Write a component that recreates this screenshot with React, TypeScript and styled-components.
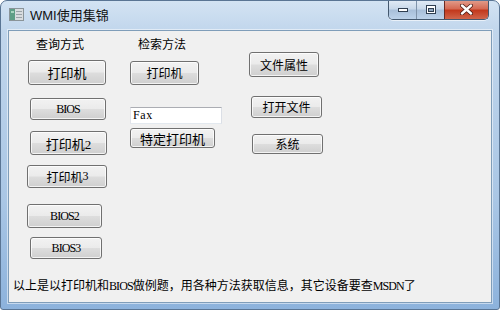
import React from 'react'
import styled, { createGlobalStyle } from 'styled-components'

const GlobalStyle = createGlobalStyle`
	html, body {
		margin: 0;
		padding: 0;
		background: #ffffff;
	}
`

const cjk = `"Liberation Serif", "Noto Sans CJK SC", serif`

type BoxProps = { $w: number; $h: number; $mt: number; $ml?: number; $fs?: number }

const Window = styled.div`
	width: 500px;
	height: 310px;
	box-sizing: border-box;
	display: flex;
	flex-direction: column;
	border: 1px solid #5a7594;
	border-radius: 7px 7px 3px 3px;
	background: linear-gradient(180deg, #d3e3f3 0px, #c1d6ec 30px, #a9c6e5 200px, #8cb2dc 310px);
	padding: 0 7px 6px 7px;
	font-family: ${cjk};
	overflow: hidden;
`

const TitleBar = styled.div`
	height: 29px;
	display: flex;
	align-items: flex-start;
`

const AppIcon = styled.svg`
	margin: 7px 0 0 1px;
	flex: none;
`

const Title = styled.span`
	margin: 7px 0 0 6px;
	font-family: "Liberation Sans", "Noto Sans CJK SC", sans-serif;
	font-size: 13px;
	line-height: 15px;
	color: #111;
	flex: 1;
`

const CaptionGroup = styled.div`
	display: flex;
	height: 19px;
	margin: -1px 3px 0 0;
	border: 1px solid #44586e;
	border-top: none;
	border-radius: 0 0 5px 5px;
	overflow: hidden;
	box-shadow: 0 1px 0 rgba(255, 255, 255, 0.6);
`

const CapBtn = styled.div<{ $w: number; $close?: boolean }>`
	width: ${(p) => p.$w}px;
	height: 100%;
	display: flex;
	align-items: center;
	justify-content: center;
	border-left: ${(p) => (p.$close ? '1px solid #6b2a22' : '1px solid #7f93aa')};
	background: ${(p) =>
		p.$close
			? 'linear-gradient(180deg, #e2a08f 0%, #d56b55 45%, #c2391d 55%, #d0654b 100%)'
			: 'linear-gradient(180deg, #e3ecf6 0%, #c9d9ea 45%, #a9c0da 55%, #bcd2ea 100%)'};
	&:first-child {
		border-left: none;
	}
`

const Client = styled.div`
	flex: 1;
	display: flex;
	flex-direction: column;
	background: #f0f0f0;
	border: 1px solid #7f9db9;
	box-shadow: 0 0 0 1px rgba(255, 255, 255, 0.5);
`

const Columns = styled.div`
	flex: 1;
	display: flex;
	align-items: flex-start;
`

const Column = styled.div<{ $w: number; $ml: number }>`
	width: ${(p) => p.$w}px;
	margin-left: ${(p) => p.$ml}px;
	display: flex;
	flex-direction: column;
	align-items: flex-start;
`

const Label = styled.div<{ $mt: number; $ml: number }>`
	margin-top: ${(p) => p.$mt}px;
	margin-left: ${(p) => p.$ml}px;
	font-size: 12px;
	line-height: 14px;
	color: #000;
`

// ASCII runs are narrower in the original bitmap font
const Latin = styled.span`
	font-family: "Liberation Serif", serif;
	font-size: 12px;
	letter-spacing: -0.9px;
`

const Button = styled.div<BoxProps>`
	box-sizing: border-box;
	width: ${(p) => p.$w}px;
	height: ${(p) => p.$h}px;
	margin-top: ${(p) => p.$mt}px;
	margin-left: ${(p) => p.$ml ?? 0}px;
	display: flex;
	align-items: center;
	justify-content: center;
	border: 1px solid #707070;
	border-radius: 3px;
	background: linear-gradient(180deg, #f2f2f2 0%, #ebebeb 48%, #dddddd 52%, #cfcfcf 100%);
	box-shadow: inset 0 0 0 1px rgba(255, 255, 255, 0.75);
	font-size: ${(p) => p.$fs ?? 12}px;
	color: #000;
	white-space: nowrap;
`

const TextBox = styled.div<BoxProps>`
	box-sizing: border-box;
	width: ${(p) => p.$w}px;
	height: ${(p) => p.$h}px;
	margin-top: ${(p) => p.$mt}px;
	background: #ffffff;
	border: 1px solid #abadb3;
	border-color: #abadb3 #dbdfe6 #e3e9ef #e2e3ea;
	padding: 0 2px;
	font-family: "Liberation Serif", serif;
	font-size: 12px;
	line-height: 15px;
	letter-spacing: 0.6px;
	color: #000;
`

const Footer = styled.div`
	padding: 0 0 9px 4px;
	font-size: 12px;
	line-height: 14px;
	color: #000;
`

const App = () => {
	return (
		<>
			<GlobalStyle />
			<Window>
				<TitleBar>
					<AppIcon width="15" height="13" viewBox="0 0 15 13">
						<rect x="0.5" y="0.5" width="14" height="12" fill="#d8dcdf" stroke="#8a9499" />
						<rect x="1" y="1" width="5" height="11" fill="#5f9e86" />
						<rect x="2" y="3" width="3" height="2" fill="#a8d4bf" />
						<rect x="7" y="3" width="6" height="1" fill="#9aa3a8" />
						<rect x="7" y="6" width="6" height="1" fill="#9aa3a8" />
						<rect x="7" y="9" width="6" height="1" fill="#9aa3a8" />
					</AppIcon>
					<Title>WMI使用集锦</Title>
					<CaptionGroup>
						<CapBtn $w={27}>
							<svg width="10" height="4" viewBox="0 0 10 4">
								<rect x="0.5" y="0.5" width="9" height="3" fill="#fff" stroke="#2f3e50" />
							</svg>
						</CapBtn>
						<CapBtn $w={27}>
							<svg width="10" height="9" viewBox="0 0 10 9">
								<rect x="0.5" y="0.5" width="9" height="8" fill="#fff" stroke="#2f3e50" />
								<rect x="2.5" y="3.5" width="5" height="3" fill="#8fa6bf" stroke="#2f3e50" />
							</svg>
						</CapBtn>
						<CapBtn $w={43} $close>
							<svg width="13" height="11" viewBox="0 0 13 11">
								<path d="M2 1.5 L11 9.5 M11 1.5 L2 9.5" stroke="#4a1a12" strokeWidth="4" strokeLinecap="round" />
								<path d="M2 1.5 L11 9.5 M11 1.5 L2 9.5" stroke="#ffffff" strokeWidth="2.4" strokeLinecap="round" />
							</svg>
						</CapBtn>
					</CaptionGroup>
				</TitleBar>
				<Client>
					<Columns>
						<Column $w={100} $ml={18}>
							<Label $mt={7} $ml={9}>查询方式</Label>
							<Button $w={78} $h={25} $mt={8} $ml={1} $fs={13}>打印机</Button>
							<Button $w={76} $h={22} $mt={13} $ml={3}><Latin>BIOS</Latin></Button>
							<Button $w={77} $h={24} $mt={11} $ml={3} $fs={13}>打印机2</Button>
							<Button $w={80} $h={23} $mt={10}>打印机<Latin>3</Latin></Button>
							<Button $w={75} $h={24} $mt={16}><Latin>BIOS2</Latin></Button>
							<Button $w={72} $h={22} $mt={9} $ml={3}><Latin>BIOS3</Latin></Button>
						</Column>
						<Column $w={110} $ml={3}>
							<Label $mt={7} $ml={8}>检索方法</Label>
							<Button $w={69} $h={24} $mt={9}>打印机</Button>
							<TextBox $w={92} $h={17} $mt={22}>Fax</TextBox>
							<Button $w={85} $h={20} $mt={4} $fs={13}>特定打印机</Button>
						</Column>
						<Column $w={90} $ml={9}>
							<Button $w={70} $h={25} $mt={21}>文件属性</Button>
							<Button $w={71} $h={22} $mt={19} $ml={2}>打开文件</Button>
							<Button $w={71} $h={20} $mt={16} $ml={3}>系统</Button>
						</Column>
					</Columns>
					<Footer>
						以上是以打印机和<Latin>BIOS</Latin>做例题，用各种方法获取信息，其它设备要查<Latin>MSDN</Latin>了
					</Footer>
				</Client>
			</Window>
		</>
	)
}

export default App
